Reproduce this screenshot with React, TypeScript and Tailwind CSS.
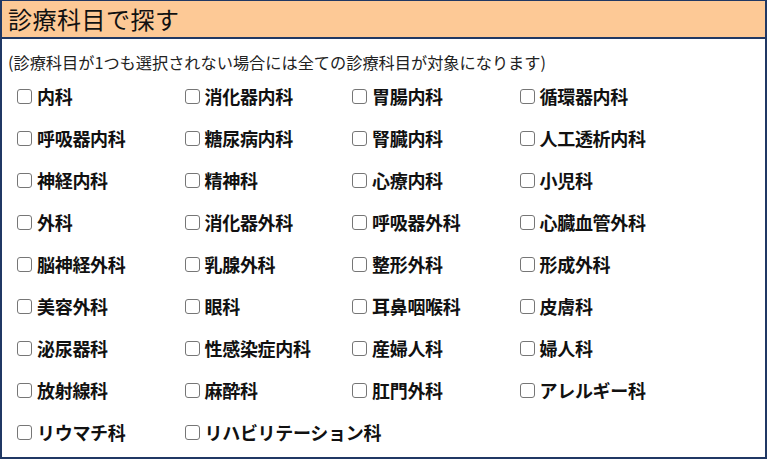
const items = [
  "内科", "消化器内科", "胃腸内科", "循環器内科",
  "呼吸器内科", "糖尿病内科", "腎臓内科", "人工透析内科",
  "神経内科", "精神科", "心療内科", "小児科",
  "外科", "消化器外科", "呼吸器外科", "心臓血管外科",
  "脳神経外科", "乳腺外科", "整形外科", "形成外科",
  "美容外科", "眼科", "耳鼻咽喉科", "皮膚科",
  "泌尿器科", "性感染症内科", "産婦人科", "婦人科",
  "放射線科", "麻酔科", "肛門外科", "アレルギー科",
  "リウマチ科", "リハビリテーション科",
];

export default function App() {
  return (
    <div className="w-[767px] h-[459px] border-2 border-t border-[#203864] bg-white font-['Noto_Sans_CJK_JP',sans-serif] text-[#111]">
      {/* Header */}
      <div className="h-[38px] bg-[#fdc996] border-b-2 border-[#203864] flex items-center px-[6px]">
        <h2 className="text-[24px] leading-none tracking-[0.5px]">診療科目で探す</h2>
      </div>

      <p className="mt-[13px] ml-[6px] text-[16.2px] leading-[20px] text-[#222] whitespace-nowrap">
        (診療科目が1つも選択されない場合には全ての診療科目が対象になります)
      </p>

      {/* Department checkboxes */}
      <div className="mt-[3px] pl-[15px] grid grid-cols-[repeat(4,167.5px)] auto-rows-[42px]">
        {items.map((name) => (
          <label key={name} className="flex items-center gap-[5px] h-[42px] text-[18px] font-bold leading-none whitespace-nowrap cursor-pointer">
            <span className="block w-[15px] h-[15px] min-w-[15px] rounded-[3px] border-[1.5px] border-[#767676] bg-white" />
            <span className="tracking-[-0.3px]">{name}</span>
          </label>
        ))}
      </div>
    </div>
  );
}
